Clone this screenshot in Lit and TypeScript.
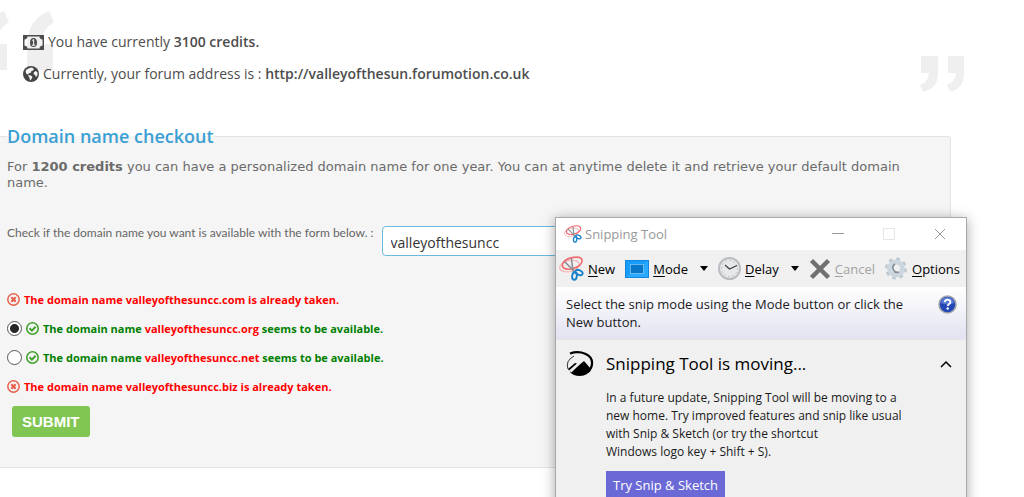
import { LitElement, html, svg, css } from "lit";
import { customElement } from "lit/decorators.js";

interface DomainResult {
  name: string;
  ext: string;
  available: boolean;
}

const RESULTS: DomainResult[] = [
  { name: "valleyofthesuncc", ext: ".com", available: false },
  { name: "valleyofthesuncc", ext: ".org", available: true },
  { name: "valleyofthesuncc", ext: ".net", available: true },
  { name: "valleyofthesuncc", ext: ".biz", available: false },
];

const scissors = svg`
  <g fill="none" stroke-linecap="round">
    <ellipse cx="10.500" cy="10" rx="10" ry="5.500" transform="rotate(-14 10.500 10)" stroke="#f8b9b9" stroke-width="1.300"/>
    <path d="M12 13 C5 14 2 11 4 7 C8 1 22 -1 23 4 C23.500 8 19 11 14 12.500" stroke="#f06a6e" stroke-width="1.600"/>
    <path d="M6 6 L15 15 M12.500 3 L14 15" stroke="#8b8f94" stroke-width="1.600"/>
    <ellipse cx="15.500" cy="20" rx="2.300" ry="3.800" transform="rotate(8 15.500 20)" stroke="#1681c9" stroke-width="1.900"/>
    <ellipse cx="20" cy="16.500" rx="3.800" ry="2.300" transform="rotate(24 20 16.500)" stroke="#1681c9" stroke-width="1.900"/>
  </g>`;

@customElement("snipping-window")
export class SnippingWindow extends LitElement {
  static styles = css`
    :host {
      display: flex;
      flex-direction: column;
      box-sizing: border-box;
      border: 1px solid #a9a9a9;
      background: #f0f0f0;
      box-shadow: 0 2px 12px rgba(0, 0, 0, 0.35);
      font: 13px/18px "Open Sans", "Noto Sans", sans-serif;
      color: #1a1a1a;
    }
    button {
      border: 0;
      padding: 0;
      background: none;
      font: inherit;
      color: inherit;
      display: flex;
      align-items: center;
    }
    svg { display: block; flex: none; }
    .title {
      display: flex;
      align-items: center;
      height: 32px;
      padding: 0 20px 0 8px;
      background: #fff;
      color: #999;
    }
    .caption { flex: 1; margin-left: 3px; }
    .controls { display: flex; gap: 39px; }
    .tools {
      display: flex;
      align-items: center;
      justify-content: space-between;
      height: 37px;
      padding: 0 6px 0 3px;
      color: #000;
    }
    .tools button { gap: 4px; }
    .tools .drop { gap: 12px; }
    .pair { display: flex; align-items: center; gap: 4px; }
    .tools button:disabled { color: #a3a3a3; }
    u { text-underline-offset: 2px; }
    .hint {
      display: flex;
      justify-content: space-between;
      align-items: flex-start;
      padding: 8px 9px 8px 10px;
      min-height: 36px;
      background: linear-gradient(#fff, #e2e2f1);
    }
    .hint p { margin: 0; max-width: 345px; }
    .notice {
      display: grid;
      grid-template-columns: 28px 1fr 16px;
      column-gap: 12px;
      padding: 11px 10px 24px 10px;
      border-top: 1px solid #e6e6e6;
      align-items: center;
    }
    h2 { margin: 0; font-size: 17px; line-height: 24px; font-weight: 400; color: #000; }
    .notice .body { grid-column: 2; padding-top: 12px; }
    .body p { margin: 0 0 10px; font-size: 12px; line-height: 18px; }
    .try { height: 28px; padding: 0 7px; background: #6b69d6; color: #fff; }
  `;

  render() {
    return html`
      <div class="title">
        <svg width="18" height="18" viewBox="0 0 25 25">${scissors}</svg>
        <span class="caption">Snipping Tool</span>
        <div class="controls">
          <button aria-label="Minimize"><svg width="12" height="12" viewBox="0 0 12 12"><path d="M0 5.500h12" stroke="#999"/></svg></button>
          <button aria-label="Maximize" disabled><svg width="12" height="12" viewBox="0 0 12 12"><rect x=".5" y=".5" width="11" height="11" fill="none" stroke="#e6e6e6"/></svg></button>
          <button aria-label="Close"><svg width="12" height="12" viewBox="0 0 12 12"><path d="M1 1l10 10M11 1L1 11" stroke="#999"/></svg></button>
        </div>
      </div>
      <div class="tools">
        <button>
          <svg width="25" height="25" viewBox="0 0 25 25">${scissors}</svg>
          <span><u>N</u>ew</span>
        </button>
        <button class="drop">
          <span class="pair">
            <svg width="24" height="18" viewBox="0 0 24 18">
              <rect x=".5" y=".5" width="23" height="17" fill="#159dfa" stroke="#1385dc"/>
              <path d="M1 17L23 1v16z" fill="#27aaff"/>
              <rect x="5.500" y="4.500" width="13" height="9" fill="#0877ca" stroke="#bfe4ff" stroke-dasharray="1 1"/>
            </svg>
            <span><u>M</u>ode</span>
          </span>
          <svg width="8" height="5" viewBox="0 0 8 5"><path d="M0 0h8L4 5z"/></svg>
        </button>
        <button class="drop">
          <span class="pair">
            <svg width="23" height="23" viewBox="0 0 23 23">
              <circle cx="11.500" cy="11.500" r="10.500" fill="#e6e8ea" stroke="#b9bdc1" stroke-width="2"/>
              <circle cx="11.500" cy="11.500" r="8" fill="none" stroke="#9da3a8" stroke-dasharray="1 3.190"/>
              <path d="M7 8l4.500 4L19 8.500" fill="none" stroke="#3b3f42" stroke-width="1.100"/>
            </svg>
            <span><u>D</u>elay</span>
          </span>
          <svg width="8" height="5" viewBox="0 0 8 5"><path d="M0 0h8L4 5z"/></svg>
        </button>
        <button disabled>
          <svg width="22" height="22" viewBox="0 0 22 22">
            <path d="M2.500 2.500l17 17M19.500 2.500l-17 17" stroke="#707070" stroke-width="4.500"/>
          </svg>
          <span><u>C</u>ancel</span>
        </button>
        <button>
          <svg width="23" height="25" viewBox="0 0 23 25">
            <circle cx="11" cy="12.500" r="9.500" fill="none" stroke="#bcc8d1" stroke-width="3" stroke-dasharray="3.730 3.730"/>
            <circle cx="11" cy="12.500" r="6.500" fill="none" stroke="#ccd6de" stroke-width="5"/>
            <path d="M10 8a4.500 4.500 0 0 0 4 8" fill="none" stroke="#7e8b96" stroke-width="1.600"/>
          </svg>
          <span><u>O</u>ptions</span>
        </button>
      </div>
      <div class="hint">
        <p>Select the snip mode using the Mode button or click the New button.</p>
        <button aria-label="Help">
          <svg width="19" height="19" viewBox="0 0 19 19">
            <circle cx="9.500" cy="9.500" r="8.500" fill="#2347b4" stroke="#a3a6ad" stroke-width="1.600"/>
            <path d="M3 8a6.500 6 0 0 1 13 0q-6 3-13 0z" fill="#5577d4"/>
            <path d="M6.800 7.300c0-3.500 5.600-3.400 5.600-.4 0 2-2.700 2-2.700 4.100" fill="none" stroke="#fff" stroke-width="1.900"/>
            <circle cx="9.700" cy="13.500" r="1.200" fill="#fff"/>
          </svg>
        </button>
      </div>
      <div class="notice">
        <svg width="28" height="26" viewBox="0 0 28 26">
          <path d="M4 2.500C14-1 27 3 26 13c0 4-2 6-4 8" fill="none" stroke="#000" stroke-width="2.200"/>
          <path d="M8 5Q-1 10 2 18" fill="none" stroke="#000" stroke-width=".8"/>
          <path d="M4 21L12 15 18 10l7 8q-3 7-11 7-7 0-10-4z"/>
          <path d="M2 18l7-6 2 .5-8 7z"/>
          <path d="M5 21l8-8" stroke="#f0f0f0" stroke-width="1.200"/>
        </svg>
        <h2>Snipping Tool is moving...</h2>
        <button aria-label="Collapse"><svg width="12" height="8" viewBox="0 0 12 8"><path d="M1 7l5-5 5 5" fill="none" stroke="#000" stroke-width="1.500"/></svg></button>
        <div class="body">
          <p>In a future update, Snipping Tool will be moving to a<br>new home. Try improved features and snip like usual<br>with Snip &amp; Sketch (or try the shortcut<br>Windows logo key + Shift + S).</p>
          <button class="try">Try Snip &amp; Sketch</button>
        </div>
      </div>
    `;
  }
}

@customElement("app-root")
export class AppRoot extends LitElement {
  static styles = css`
    :host {
      display: block;
      position: relative;
      box-sizing: border-box;
      height: 100vh;
      overflow: hidden;
      background: #fff;
      color: #4d4d4d;
      font-family: "Open Sans", "Noto Sans", sans-serif;
    }
    svg { display: block; flex: none; }
    .mark { position: absolute; fill: #efefef; }
    .open { left: 0; top: 8px; }
    .close { right: 58px; top: 56px; }
    .account {
      position: relative;
      display: flex;
      flex-direction: column;
      gap: 8px;
      padding: 30px 80px 0 23px;
      font-size: 14px;
      line-height: 24px;
    }
    .account p { display: flex; align-items: center; gap: 4px; margin: 0; white-space: pre; }
    .account b { font-weight: 600; }
    fieldset {
      margin: 38px 73px 0 0;
      padding: 11px 7px 30px;
      border: 1px solid #e3e3e3;
      border-left: 0;
      border-radius: 0 4px 4px 0;
      background: #f5f5f5;
      min-width: 0;
    }
    legend { padding: 0; font-size: 18px; line-height: 24px; font-weight: 600; color: #3a9fd3; }
    .intro { margin: 0; font: 13px/16px "DejaVu Sans", sans-serif; color: #6b6b6b; max-width: 900px; }
    .check { display: flex; align-items: flex-start; gap: 8px; margin-top: 35px; }
    .check label { font: 12px/14px "Lato", sans-serif; color: #666; }
    .check input {
      flex: 1;
      min-width: 0;
      max-width: 320px;
      box-sizing: border-box;
      height: 30px;
      padding: 2px 8px 0;
      border: 1px solid #6cb9e0;
      border-radius: 4px;
      background: #fff;
      color: #333;
      font: 14px "Open Sans", sans-serif;
      outline: 0;
    }
    ul { list-style: none; margin: 29px 0 0; padding: 0; display: grid; grid-auto-rows: 29px; }
    li, li label { display: flex; align-items: center; gap: 4px; }
    li { font-size: 11px; font-weight: 700; color: red; }
    .free { color: #008000; }
    .free em { font-style: normal; color: red; }
    input[type="radio"] {
      appearance: none;
      box-sizing: border-box;
      width: 15px;
      height: 15px;
      margin: 0;
      border: 1px solid #555;
      border-radius: 50%;
      background: #fff;
    }
    input[type="radio"]:checked { background: radial-gradient(circle, #262626 4px, #fff 5px); }
    .submit {
      display: block;
      height: 31px;
      margin: 5px 5px 0;
      padding: 0 10px;
      border: 0;
      border-radius: 3px;
      background: #81c653;
      color: #fff;
      font: 700 15px "Liberation Sans", sans-serif;
    }
    snipping-window { position: absolute; top: 217px; right: 57px; width: 412px; }
  `;

  private badge(ok: boolean) {
    return ok
      ? html`<svg width="13" height="13" viewBox="0 0 13 13" fill="none" stroke="#3fa02c"><circle cx="6.500" cy="6.500" r="5.700" stroke-width="1.600"/><path d="M3.600 6.300l2.300 2.300 3.700-3.900" stroke-width="2"/></svg>`
      : html`<svg width="13" height="13" viewBox="0 0 13 13" fill="none" stroke="#e8604c"><circle cx="6.500" cy="6.500" r="5.700" stroke-width="1.500"/><path d="M4.300 4.300l4.400 4.400M8.700 4.300l-4.400 4.400" stroke-width="2.200"/></svg>`;
  }

  private row(r: DomainResult, i: number) {
    if (!r.available) {
      return html`<li>${this.badge(false)}<span>The domain name ${r.name}${r.ext} is already taken.</span></li>`;
    }
    return html`<li class="free">
      <label>
        <input type="radio" name="domain" .value=${r.name + r.ext} ?checked=${i === 1}>
        ${this.badge(true)}
        <span>The domain name <em>${r.name}${r.ext}</em> seems to be available.</span>
      </label>
    </li>`;
  }

  render() {
    return html`
      <svg class="mark open" width="56" height="64" viewBox="0 0 56 64">
        <path d="M49 3l5 11Q42 21 41 36h12v26H27V38Q27 12 49 3z"/>
        <path d="M4 3l5 11Q-3 21-4 36H7v26H-18V38Q-18 12 4 3z"/>
      </svg>
      <svg class="mark close" width="46" height="38" viewBox="0 0 46 38">
        <path d="M1 0h17v18Q18 32 3 36l-3-7q8-3 9-12H1z"/>
        <path d="M28 0h16v18q0 14-14 18l-3-7q8-3 9-12h-8z"/>
      </svg>

      <div class="account">
        <p>
          <svg width="21" height="15" viewBox="0 0 21 15"><path fill="#4d4d4d" fill-rule="evenodd" d="M0 0h21v15H0zM4.500 1.500Q4.500 4 1.500 4.500v6Q4.500 11 4.500 13.500h12q0-2.500 3-3v-6Q16.500 4 16.500 1.500z"/><ellipse cx="10.500" cy="7.500" rx="3.500" ry="4.600" fill="#4d4d4d"/><path d="M9.200 5.500l1.500-1V10M9 10.200h3.200" stroke="#fff" fill="none"/></svg><span>You have currently <b>3100 credits.</b></span></p>
        <p>
          <svg width="16" height="16" viewBox="0 0 16 16"><circle cx="8" cy="8" r="8" fill="#444"/><path d="M3.500 3.500L6.500 2l2.500-.5L11 3l-1 1.500L8.500 5 7.500 7 6 7.200 5 8.500 3.500 8 2.500 5.500zM5 9l3 .5 1.500 1.500L8.500 13 7 14.500 6.500 12zM11 6l2-1 1.500 1.500V9l-1.500 2-1-2-1.500-1z" fill="#f4f4f4"/></svg><span>Currently, your forum address is : <b>http://valleyofthesun.forumotion.co.uk</b></span></p>
      </div>

      <form @submit=${(e: Event) => e.preventDefault()}>
        <fieldset>
          <legend>Domain name checkout</legend>
          <p class="intro">For <b>1200 credits</b> you can have a personalized domain name for one year. You can at anytime delete it and retrieve your default domain name.</p>
          <div class="check">
            <label for="domain">Check if the domain name you want is available with the form below. :</label>
            <input id="domain" type="text" .value=${"valleyofthesuncc"} spellcheck="false">
          </div>
          <ul>${RESULTS.map((r, i) => this.row(r, i))}</ul>
          <button class="submit" type="submit">SUBMIT</button>
        </fieldset>
      </form>

      <snipping-window role="dialog" aria-label="Snipping Tool"></snipping-window>
    `;
  }
}
